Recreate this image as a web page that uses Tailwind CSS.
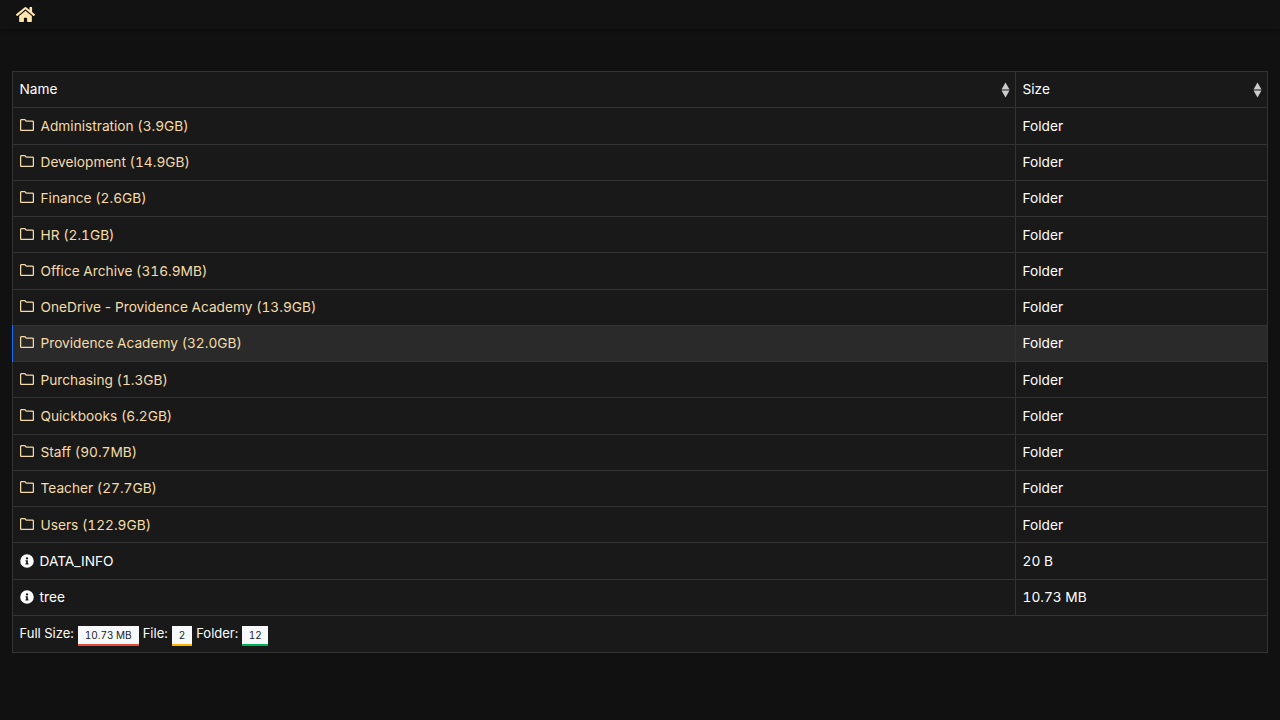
<!DOCTYPE html>
<html lang="en">
<head>
  <meta charset="UTF-8">
  <meta name="viewport" content="width=device-width, initial-scale=1.0">
  <title>Index</title>
  <script src="https://cdn.jsdelivr.net/npm/@tailwindcss/browser@4"></script>
</head>
<body class="bg-[#111111] text-white font-['Inter',sans-serif] text-[13.7px] tabular-nums h-[720px] overflow-hidden">
  <!-- Navigation -->
  <nav class="h-[29px] bg-[#121212] shadow-[0_1px_3px_rgba(0,0,0,0.4)] pl-4 pt-[6px]">
    <svg class="w-[19px] h-[17px] text-[#ffe4ae]" viewBox="0 0 576 512" fill="currentColor"><path d="M280.4 148.3L96 300.1V464a16 16 0 0 0 16 16l112.100-.3a16 16 0 0 0 15.900-16V368a16 16 0 0 1 16-16h64a16 16 0 0 1 16 16v95.600a16 16 0 0 0 16 16.100L464 480a16 16 0 0 0 16-16V300L295.700 148.300a12.200 12.200 0 0 0-15.300 0zM571.600 251.500L488 182.600V44.100a12 12 0 0 0-12-12h-56a12 12 0 0 0-12 12v72.600L318.500 43a48 48 0 0 0-61 0L4.300 251.500a12 12 0 0 0-1.600 16.900l25.500 31A12 12 0 0 0 45.200 301l235.200-193.700a12.200 12.200 0 0 1 15.300 0L530.900 301a12 12 0 0 0 16.900-1.600l25.500-31a12 12 0 0 0-1.700-16.900z"/></svg>
  </nav>

  <!-- File table -->
  <main class="px-3 pt-[42px]">
    <table class="w-full table-fixed border-collapse bg-[#191919] border border-[#333333]">
      <colgroup><col><col class="w-[252px]"></colgroup>
      <thead>
        <tr class="h-[36px] border-b border-[#333333]">
          <th class="relative border-r border-[#333333] px-[6.5px] text-left font-normal">Name
            <svg class="absolute right-[5px] top-[10px] w-[9px] h-[16px] text-[#cccccc]" viewBox="0 0 9 16" fill="currentColor"><path d="M4.500 0.500l4 7h-8zM4.500 15.500l4-7h-8z"/></svg>
          </th>
          <th class="relative px-[6.5px] text-left font-normal">Size
            <svg class="absolute right-[5px] top-[10px] w-[9px] h-[16px] text-[#cccccc]" viewBox="0 0 9 16" fill="currentColor"><path d="M4.500 0.500l4 7h-8zM4.500 15.500l4-7h-8z"/></svg>
          </th>
        </tr>
      </thead>
      <tbody id="rows"></tbody>
      <tfoot>
        <tr class="h-[37px]">
          <td colspan="2" class="px-[6.5px] text-[13px]">
            <div class="flex items-center gap-[4px]">
              <span>Full Size:</span>
              <span class="mt-[4px] bg-[#f8f9fa] text-[#222222] text-[10px] px-[7px] h-[20px] leading-[18px] border-b-2 border-[#e74c3c]">10.73 MB</span>
              <span>File:</span>
              <span class="mt-[4px] bg-[#f8f9fa] text-[#222222] text-[10px] px-[7px] h-[20px] leading-[18px] border-b-2 border-[#ffb300]">2</span>
              <span>Folder:</span>
              <span class="mt-[4px] bg-[#f8f9fa] text-[#222222] text-[10px] px-[6.5px] h-[20px] leading-[18px] border-b-2 border-[#00b359]">12</span>
            </div>
          </td>
        </tr>
      </tfoot>
    </table>
  </main>

  <script>
    const folderIcon = '<svg class="inline-block w-[14px] h-[12px] mr-[7px] align-[0px] text-[#f5dca8]" viewBox="0 0 14 12" fill="none" stroke="currentColor" stroke-width="1.300"><path d="M1.600.6h3.200l1.500 1.600h6.100a1 1 0 0 1 1 1v7.200a1 1 0 0 1-1 1H1.600a1 1 0 0 1-1-1V1.600a1 1 0 0 1 1-1z"/></svg>';
    const infoIcon = '<svg class="inline-block w-[14px] h-[14px] mr-[6px] align-[-2px] text-white" viewBox="0 0 512 512" fill="currentColor"><path d="M256 8a248 248 0 1 0 0 496 248 248 0 0 0 0-496zm0 110a42 42 0 1 1 0 84 42 42 0 0 1 0-84zm56 254a12 12 0 0 1-12 12h-88a12 12 0 0 1-12-12v-24a12 12 0 0 1 12-12h12v-64h-12a12 12 0 0 1-12-12v-24a12 12 0 0 1 12-12h64a12 12 0 0 1 12 12v100h12a12 12 0 0 1 12 12z"/></svg>';
    const folders = ['Administration (3.9GB)', 'Development (14.9GB)', 'Finance (2.6GB)', 'HR (2.1GB)', 'Office Archive (316.9MB)', 'OneDrive<span class="normal-nums"> - </span>Providence Academy (13.9GB)', 'Providence Academy (32.0GB)', 'Purchasing (1.3GB)', 'Quickbooks (6.2GB)', 'Staff (90.7MB)', 'Teacher (27.7GB)', 'Users (122.9GB)'];
    const files = [['DATA_INFO', '20 B'], ['tree', '10.73 MB']];
    let html = '';
    folders.forEach((name, i) => {
      const active = name.startsWith('Providence');
      html += `<tr class="${i === 0 ? 'h-[36.5px]' : 'h-[36.25px]'} border-b border-[#333333] ${active ? 'bg-[#2a2a2a]' : ''}">
        <td class="border-r border-[#333333] pl-[6.5px] pr-[6.5px] pt-[0.5px] text-[#f5dca8] ${active ? 'border-l border-l-[#0d6efd]' : ''}">${folderIcon}${name}</td>
        <td class="pl-[6.5px] pr-[6.5px] pt-[0.5px]">Folder</td></tr>`;
    });
    files.forEach((f) => {
      html += `<tr class="h-[36.25px] border-b border-[#333333]">
        <td class="border-r border-[#333333] pl-[6.5px] pr-[6.5px] pt-[0.5px]">${infoIcon}${f[0]}</td>
        <td class="pl-[6.5px] pr-[6.5px] pt-[0.5px]">${f[1]}</td></tr>`;
    });
    document.getElementById('rows').innerHTML = html;
  </script>
</body>
</html>
